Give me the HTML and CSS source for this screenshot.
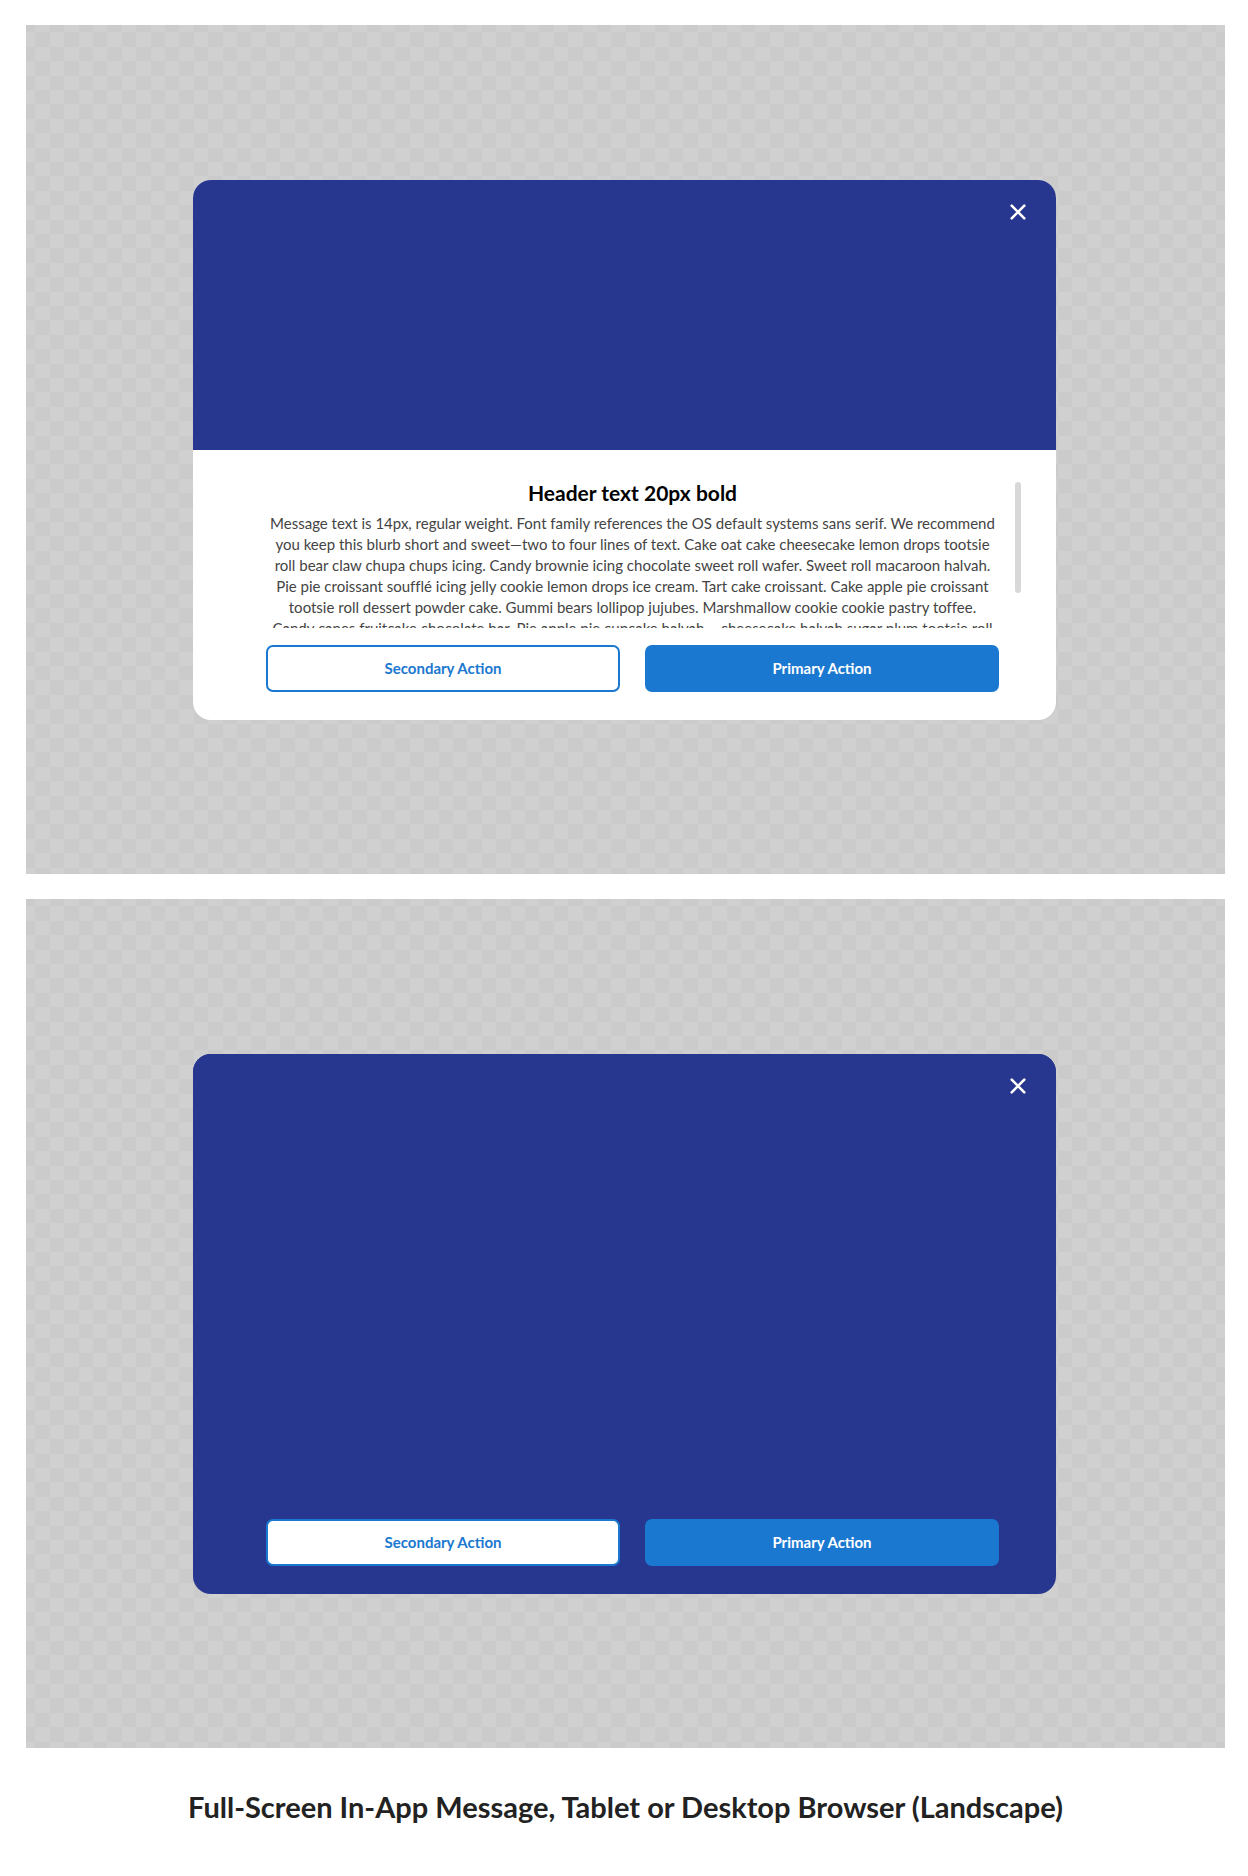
FILE: index.html
```html
<!DOCTYPE html>
<html lang="en">
<head>
<meta charset="utf-8">
<meta name="viewport" content="width=device-width, initial-scale=1">
<title>Full-Screen In-App Message</title>
<link rel="stylesheet" href="styles.css">
</head>
<body>
<main class="page">
  <section class="stage">
    <div class="modal" role="dialog" aria-labelledby="message-title">
      <button class="close" type="button" aria-label="Close">
        <svg class="close-icon" viewBox="0 0 16 16" aria-hidden="true"><path d="M1.7 1.7 14.3 14.3M14.3 1.7 1.7 14.3"/></svg>
      </button>
      <div class="image"></div>
      <div class="message">
        <div class="copy">
          <h2 class="title" id="message-title">Header text 20px bold</h2>
          <p class="text">Message text is 14px, regular weight. Font family references the OS default systems sans serif. We recommend<br>
          you keep this blurb short and sweet—two to four lines of text. Cake oat cake cheesecake lemon drops tootsie<br>
          roll bear claw chupa chups icing. Candy brownie icing chocolate sweet roll wafer. Sweet roll macaroon halvah.<br>
          Pie pie croissant soufflé icing jelly cookie lemon drops ice cream. Tart cake croissant. Cake apple pie croissant<br>
          tootsie roll dessert powder cake. Gummi bears lollipop jujubes. Marshmallow cookie cookie pastry toffee.<br>
          Candy canes fruitcake chocolate bar. Pie apple pie cupcake halvah – cheesecake halvah sugar plum tootsie roll</p>
        </div>
        <div class="scroll-thumb"></div>
      </div>
      <div class="actions">
        <button class="button secondary" type="button">Secondary Action</button>
        <button class="button primary" type="button">Primary Action</button>
      </div>
    </div>
  </section>
  <section class="stage">
    <div class="modal image-only" role="dialog" aria-label="Image message">
      <button class="close" type="button" aria-label="Close">
        <svg class="close-icon" viewBox="0 0 16 16" aria-hidden="true"><path d="M1.7 1.7 14.3 14.3M14.3 1.7 1.7 14.3"/></svg>
      </button>
      <div class="image"></div>
      <div class="actions">
        <button class="button secondary" type="button">Secondary Action</button>
        <button class="button primary" type="button">Primary Action</button>
      </div>
    </div>
  </section>
  <h1 class="caption">Full-Screen In-App Message, Tablet or Desktop Browser (Landscape)</h1>
</main>
</body>
</html>
```
FILE: styles.css
```css
* {
  box-sizing: border-box;
}

body {
  margin: 0;
  background: #fff;
  font-family: Lato, "Open Sans", sans-serif;
  font-variant-ligatures: none;
}

.page {
  display: flex;
  flex-direction: column;
  gap: 25px;
  padding: 25px 23px 51px 26px;
}

/* Each 144px tile holds ten checker squares across and down. */
.stage {
  display: flex;
  justify-content: center;
  padding: 155px 26px 154px 24px;
  background-color: #d0d0d0;
  background-image: url("data:image/svg+xml,%3Csvg xmlns='http://www.w3.org/2000/svg' width='144' height='144' viewBox='0 0 10 10' shape-rendering='crispEdges'%3E%3Cpath fill='none' stroke='%23cbcbcb' stroke-dasharray='1 1' d='M0 .5h10M1 1.5h9M0 2.5h10M1 3.5h9M0 4.5h10M1 5.5h9M0 6.5h10M1 7.5h9M0 8.5h10M1 9.5h9'/%3E%3C/svg%3E");
  background-size: 144px 144px;
  background-position: -5px -7px;
}

.modal {
  position: relative;
  display: flex;
  flex-direction: column;
  width: 100%;
  max-width: 863px;
  min-height: 540px;
  overflow: hidden;
  border-radius: 18px;
  background: #fff;
}

.image {
  flex: 1;
  background: #27368f;
}

.image-only {
  background: #27368f;
}

.close {
  position: absolute;
  top: 16px;
  right: 22px;
  display: flex;
  padding: 8px;
  border: 0;
  background: none;
  cursor: pointer;
}

.close-icon {
  width: 16px;
  height: 16px;
  fill: none;
  stroke: #fff;
  stroke-width: 2.6;
  stroke-linecap: round;
}

.message {
  display: grid;
  grid-template-columns: 1fr 6px;
  gap: 16px;
  padding: 30px 35px 0 73px;
}

.copy {
  height: 148px;
  padding-top: 2px;
  overflow: hidden;
  text-align: center;
}

.title {
  margin: 0 0 9px;
  color: #000;
  font-size: 21px;
  font-weight: 700;
  line-height: 22px;
}

.text {
  margin: 0;
  color: #444;
  font-size: 15px;
  line-height: 21px;
}

.scroll-thumb {
  height: 111px;
  margin-top: 2px;
  border-radius: 3px;
  background: #d8d8d8;
}

.actions {
  display: grid;
  grid-template-columns: 1fr 1fr;
  gap: 25px;
  padding: 17px 57px 28px 73px;
}

.button {
  height: 47px;
  padding: 0 16px 2px;
  border: 2px solid #1b78d0;
  border-radius: 7px;
  font-family: inherit;
  font-size: 15px;
  font-weight: 700;
  line-height: 20px;
  cursor: pointer;
}

.secondary {
  background: #fff;
  color: #1b78d0;
}

.primary {
  background: #1b78d0;
  color: #fff;
}

.caption {
  margin: 16px 0 0;
  color: #222;
  font-size: 29px;
  font-weight: 700;
  line-height: 36px;
  text-align: center;
}
```
